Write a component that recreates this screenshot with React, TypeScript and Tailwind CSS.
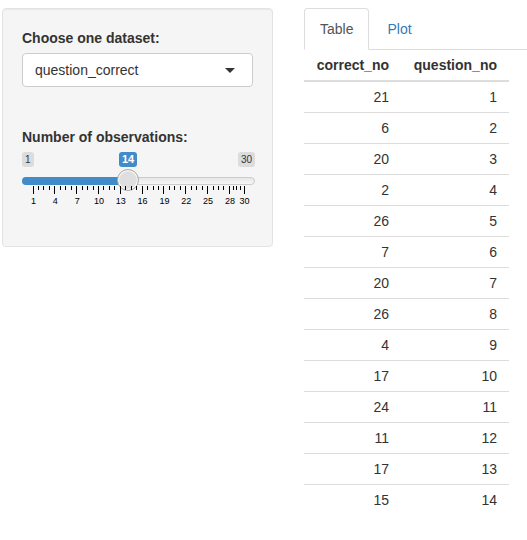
import React from "react";

const rows: [number, number][] = [
  [21, 1], [6, 2], [20, 3], [2, 4], [26, 5], [7, 6], [20, 7],
  [26, 8], [4, 9], [17, 10], [24, 11], [11, 12], [17, 13], [15, 14],
];

const majors = [1, 4, 7, 10, 13, 16, 19, 22, 25, 28, 30];
const pos = (v: number) => 11 + ((v - 1) / 29) * 211;
const minors: number[] = [];
for (let i = 1; i < majors.length; i++) {
  const a = majors[i - 1];
  const b = majors[i];
  for (let z = 1; z <= 3; z++) minors.push(a + ((b - a) * z) / 4);
}

function Slider() {
  return (
    <div className="relative h-[60px] w-[233px]">
      <span className="absolute left-0 top-0 rounded-[3px] bg-[rgba(0,0,0,0.1)] px-[3px] py-px text-[10px] leading-[13px] text-[#333]">1</span>
      <span className="absolute left-[97px] top-0 rounded-[3px] bg-[#428bca] px-[3px] py-px text-[11px] font-bold leading-[13px] text-white">14</span>
      <span className="absolute right-0 top-0 rounded-[3px] bg-[rgba(0,0,0,0.1)] px-[3px] py-px text-[10px] leading-[13px] text-[#333]">30</span>
      <div className="absolute left-0 right-0 top-[25px] h-[8px] rounded-full border border-[#ccc] bg-[linear-gradient(to_bottom,#dedede_-50%,#fff_150%)]" />
      <div className="absolute left-0 top-[25px] h-[8px] w-[106px] rounded-l-full bg-[#428bca]" />
      <div className="absolute left-[95px] top-[17px] h-[22px] w-[22px] rounded-full border border-[#ababab] bg-[#dedede] shadow-[inset_0_0_1px_1px_#fff]" />
      {majors.map((v) => (
        <React.Fragment key={v}>
          <span className="absolute top-[34px] h-[8px] w-px bg-black" style={{ left: Math.floor(pos(v)) }} />
          <span
            className="absolute top-[44px] -translate-x-1/2 text-[9px] leading-[11px] text-black"
            style={{ left: pos(v) + 0.5 }}
          >
            {v}
          </span>
        </React.Fragment>
      ))}
      {minors.map((v, i) => (
        <span key={i} className="absolute top-[34px] h-[4px] w-px bg-black" style={{ left: Math.floor(pos(v)) }} />
      ))}
    </div>
  );
}

export default function App() {
  return (
    <div className="flex w-[527px] items-start pl-[2px] pt-2 font-['Liberation_Sans',Arial,sans-serif] text-[14px] text-[#333]">
      <div className="h-[239px] w-[271px] shrink-0 rounded border border-[#e3e3e3] bg-[#f5f5f5] p-[19px] shadow-[inset_0_1px_1px_rgba(0,0,0,0.05)]">
        <div className="mb-[5px] font-bold leading-5">Choose one dataset:</div>
        <div className="flex h-[34px] items-center justify-between rounded border border-[#ccc] bg-white pl-3 pr-[17px] leading-5">
          <span>question_correct</span>
          <span className="h-0 w-0 border-x-[5px] border-t-[5px] border-x-transparent border-t-[#333]" />
        </div>
        <div className="mb-[5px] mt-10 font-bold leading-5">Number of observations:</div>
        <Slider />
      </div>
      <div className="ml-[31px] w-[223px] shrink-0">
        <div className="flex border-b border-[#ddd]">
          <div className="-mb-px rounded-t border border-[#ddd] border-b-transparent bg-white px-[15px] py-[10px] leading-5 text-[#555]">Table</div>
          <div className="-mb-px ml-[2px] border border-transparent px-[15px] py-[10px] leading-5 text-[#337ab7]">Plot</div>
        </div>
        <table className="w-[205px] border-collapse">
          <thead>
            <tr>
              <th className="w-[97px] border-b-2 border-[#ddd] px-3 py-[5px] text-right font-bold leading-5">correct_no</th>
              <th className="border-b-2 border-[#ddd] px-3 py-[5px] text-right font-bold leading-5">question_no</th>
            </tr>
          </thead>
          <tbody>
            {rows.map(([a, b], i) => (
              <tr key={i}>
                <td className="border-t border-[#ddd] px-3 py-[5px] text-right leading-5">{a}</td>
                <td className="border-t border-[#ddd] px-3 py-[5px] text-right leading-5">{b}</td>
              </tr>
            ))}
          </tbody>
        </table>
      </div>
    </div>
  );
}
